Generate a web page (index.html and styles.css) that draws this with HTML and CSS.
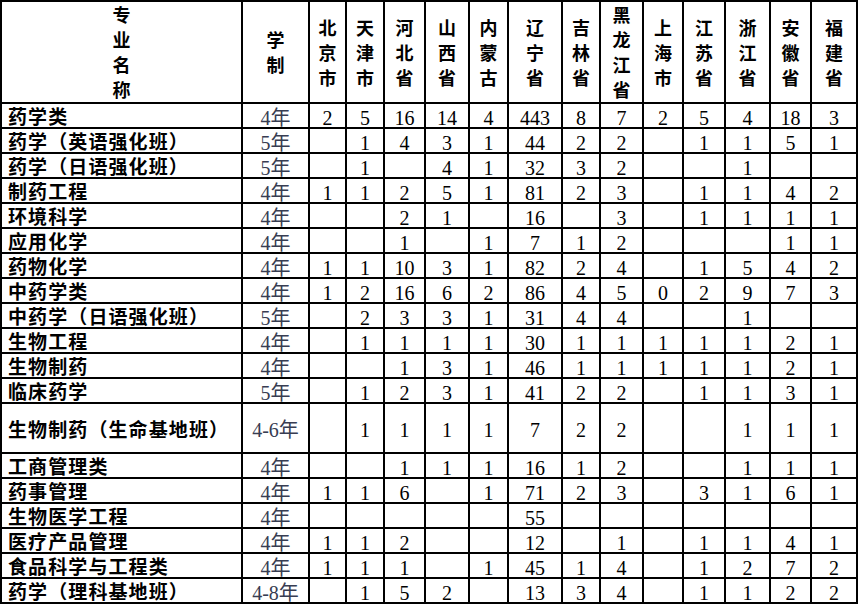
FILE: index.html
```html
<!DOCTYPE html>
<html lang="zh-CN">
<head>
<meta charset="utf-8">
<title>招生计划</title>
<link rel="stylesheet" href="styles.css">
</head>
<body>
<div class="sheet">
  <div class="h hname">专<br>业<br>名<br>称</div>
  <div class="h">学<br>制</div>
  <div class="h">北<br>京<br>市</div>
  <div class="h">天<br>津<br>市</div>
  <div class="h">河<br>北<br>省</div>
  <div class="h">山<br>西<br>省</div>
  <div class="h">内<br>蒙<br>古</div>
  <div class="h">辽<br>宁<br>省</div>
  <div class="h">吉<br>林<br>省</div>
  <div class="h">黑<br>龙<br>江<br>省</div>
  <div class="h">上<br>海<br>市</div>
  <div class="h">江<br>苏<br>省</div>
  <div class="h">浙<br>江<br>省</div>
  <div class="h">安<br>徽<br>省</div>
  <div class="h">福<br>建<br>省</div>

  <div class="name">药学类</div><div class="len">4年</div>
  <div class="n">2</div><div class="n">5</div><div class="n">16</div><div class="n">14</div><div class="n">4</div><div class="n">443</div><div class="n">8</div><div class="n">7</div><div class="n">2</div><div class="n">5</div><div class="n">4</div><div class="n">18</div><div class="n">3</div>

  <div class="name">药学（英语强化班）</div><div class="len">5年</div>
  <div class="n"></div><div class="n">1</div><div class="n">4</div><div class="n">3</div><div class="n">1</div><div class="n">44</div><div class="n">2</div><div class="n">2</div><div class="n"></div><div class="n">1</div><div class="n">1</div><div class="n">5</div><div class="n">1</div>

  <div class="name">药学（日语强化班）</div><div class="len">5年</div>
  <div class="n"></div><div class="n">1</div><div class="n"></div><div class="n">4</div><div class="n">1</div><div class="n">32</div><div class="n">3</div><div class="n">2</div><div class="n"></div><div class="n"></div><div class="n">1</div><div class="n"></div><div class="n"></div>

  <div class="name">制药工程</div><div class="len">4年</div>
  <div class="n">1</div><div class="n">1</div><div class="n">2</div><div class="n">5</div><div class="n">1</div><div class="n">81</div><div class="n">2</div><div class="n">3</div><div class="n"></div><div class="n">1</div><div class="n">1</div><div class="n">4</div><div class="n">2</div>

  <div class="name">环境科学</div><div class="len">4年</div>
  <div class="n"></div><div class="n"></div><div class="n">2</div><div class="n">1</div><div class="n"></div><div class="n">16</div><div class="n"></div><div class="n">3</div><div class="n"></div><div class="n">1</div><div class="n">1</div><div class="n">1</div><div class="n">1</div>

  <div class="name">应用化学</div><div class="len">4年</div>
  <div class="n"></div><div class="n"></div><div class="n">1</div><div class="n"></div><div class="n">1</div><div class="n">7</div><div class="n">1</div><div class="n">2</div><div class="n"></div><div class="n"></div><div class="n"></div><div class="n">1</div><div class="n">1</div>

  <div class="name">药物化学</div><div class="len">4年</div>
  <div class="n">1</div><div class="n">1</div><div class="n">10</div><div class="n">3</div><div class="n">1</div><div class="n">82</div><div class="n">2</div><div class="n">4</div><div class="n"></div><div class="n">1</div><div class="n">5</div><div class="n">4</div><div class="n">2</div>

  <div class="name">中药学类</div><div class="len">4年</div>
  <div class="n">1</div><div class="n">2</div><div class="n">16</div><div class="n">6</div><div class="n">2</div><div class="n">86</div><div class="n">4</div><div class="n">5</div><div class="n">0</div><div class="n">2</div><div class="n">9</div><div class="n">7</div><div class="n">3</div>

  <div class="name">中药学（日语强化班）</div><div class="len">5年</div>
  <div class="n"></div><div class="n">2</div><div class="n">3</div><div class="n">3</div><div class="n">1</div><div class="n">31</div><div class="n">4</div><div class="n">4</div><div class="n"></div><div class="n"></div><div class="n">1</div><div class="n"></div><div class="n"></div>

  <div class="name">生物工程</div><div class="len">4年</div>
  <div class="n"></div><div class="n">1</div><div class="n">1</div><div class="n">1</div><div class="n">1</div><div class="n">30</div><div class="n">1</div><div class="n">1</div><div class="n">1</div><div class="n">1</div><div class="n">1</div><div class="n">2</div><div class="n">1</div>

  <div class="name">生物制药</div><div class="len">4年</div>
  <div class="n"></div><div class="n"></div><div class="n">1</div><div class="n">3</div><div class="n">1</div><div class="n">46</div><div class="n">1</div><div class="n">1</div><div class="n">1</div><div class="n">1</div><div class="n">1</div><div class="n">2</div><div class="n">1</div>

  <div class="name">临床药学</div><div class="len">5年</div>
  <div class="n"></div><div class="n">1</div><div class="n">2</div><div class="n">3</div><div class="n">1</div><div class="n">41</div><div class="n">2</div><div class="n">2</div><div class="n"></div><div class="n">1</div><div class="n">1</div><div class="n">3</div><div class="n">1</div>

  <div class="name">生物制药（生命基地班）</div><div class="len">4-6年</div>
  <div class="n"></div><div class="n">1</div><div class="n">1</div><div class="n">1</div><div class="n">1</div><div class="n">7</div><div class="n">2</div><div class="n">2</div><div class="n"></div><div class="n"></div><div class="n">1</div><div class="n">1</div><div class="n">1</div>

  <div class="name">工商管理类</div><div class="len">4年</div>
  <div class="n"></div><div class="n"></div><div class="n">1</div><div class="n">1</div><div class="n">1</div><div class="n">16</div><div class="n">1</div><div class="n">2</div><div class="n"></div><div class="n"></div><div class="n">1</div><div class="n">1</div><div class="n">1</div>

  <div class="name">药事管理</div><div class="len">4年</div>
  <div class="n">1</div><div class="n">1</div><div class="n">6</div><div class="n"></div><div class="n">1</div><div class="n">71</div><div class="n">2</div><div class="n">3</div><div class="n"></div><div class="n">3</div><div class="n">1</div><div class="n">6</div><div class="n">1</div>

  <div class="name">生物医学工程</div><div class="len">4年</div>
  <div class="n"></div><div class="n"></div><div class="n"></div><div class="n"></div><div class="n"></div><div class="n">55</div><div class="n"></div><div class="n"></div><div class="n"></div><div class="n"></div><div class="n"></div><div class="n"></div><div class="n"></div>

  <div class="name">医疗产品管理</div><div class="len">4年</div>
  <div class="n">1</div><div class="n">1</div><div class="n">2</div><div class="n"></div><div class="n"></div><div class="n">12</div><div class="n"></div><div class="n">1</div><div class="n"></div><div class="n">1</div><div class="n">1</div><div class="n">4</div><div class="n">1</div>

  <div class="name">食品科学与工程类</div><div class="len">4年</div>
  <div class="n">1</div><div class="n">1</div><div class="n">1</div><div class="n"></div><div class="n">1</div><div class="n">45</div><div class="n">1</div><div class="n">4</div><div class="n"></div><div class="n">1</div><div class="n">2</div><div class="n">7</div><div class="n">2</div>

  <div class="name">药学（理科基地班）</div><div class="len">4-8年</div>
  <div class="n"></div><div class="n">1</div><div class="n">5</div><div class="n">2</div><div class="n"></div><div class="n">13</div><div class="n">3</div><div class="n">4</div><div class="n"></div><div class="n">1</div><div class="n">1</div><div class="n">2</div><div class="n">2</div>
</div>
</body>
</html>
```

FILE: styles.css
```css
html, body {
  margin: 0;
  padding: 0;
  background: #fff;
}

.sheet {
  display: grid;
  width: max-content;
  background: #000;
  padding: 2px;
  gap: 2px;
  grid-template-columns: 239px 65px 35px 36px 39px 42px 37px 52px 36px 41px 38px 40px 43px 39px 44px;
  grid-template-rows: 100px repeat(12, 23px) 48px repeat(6, 23px);
}

.sheet > div {
  background: #fff;
  display: flex;
  align-items: center;
  justify-content: center;
  white-space: nowrap;
  min-width: 0;
  min-height: 0;
}

.h {
  font-family: "Noto Sans CJK SC", sans-serif;
  font-weight: 700;
  font-size: 18px;
  line-height: 25px;
  color: #000;
  text-align: center;
}

.name {
  font-family: "Noto Sans CJK SC", sans-serif;
  font-weight: 700;
  font-size: 19px;
  letter-spacing: 1.1px;
  line-height: 23px;
  color: #000;
}

.sheet > .name {
  justify-content: flex-start;
  padding-left: 6px;
}

.len {
  font-family: "Liberation Serif", "Noto Sans CJK SC", serif;
  font-size: 20px;
  line-height: 20px;
  color: #383d52;
  padding-top: 4px;
}

.n {
  font-family: "Liberation Serif", serif;
  font-size: 20px;
  line-height: 20px;
  color: #000;
  padding-top: 4px;
}
```
